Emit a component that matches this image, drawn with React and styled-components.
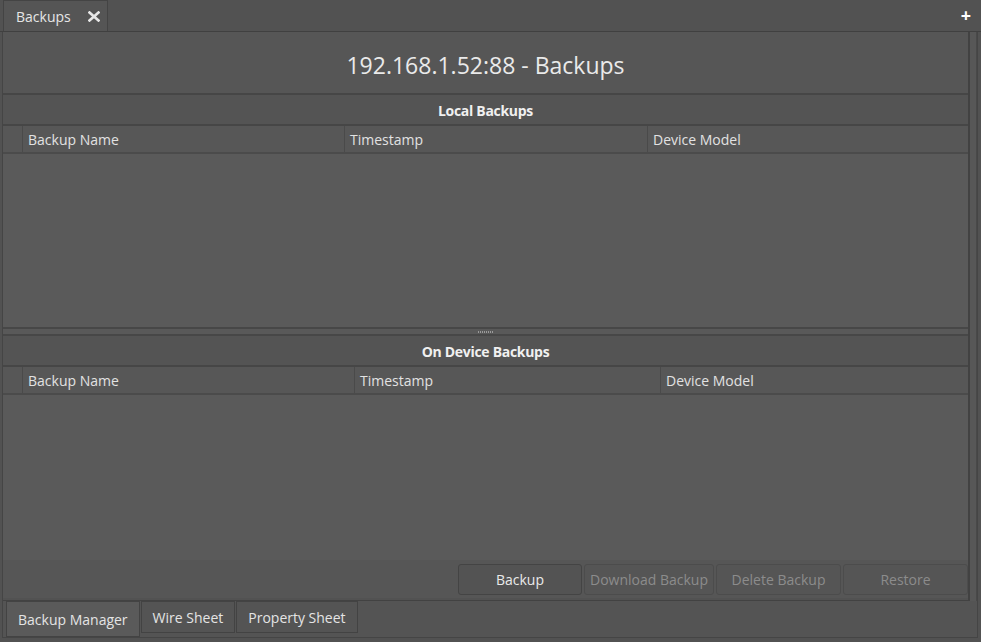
import React from "react";
import styled, { createGlobalStyle } from "styled-components";

const Global = createGlobalStyle`
  html, body { margin: 0; padding: 0; background: #525252; }
  body { font-family: "Open Sans", "Noto Sans", sans-serif; color: #e4e4e4; }
  * { box-sizing: border-box; }
`;

const Root = styled.div`
  width: 981px;
  height: 642px;
  display: flex;
  flex-direction: column;
  background: #525252;
  overflow: hidden;
`;

const TopBar = styled.div`
  height: 32px;
  display: flex;
  align-items: flex-end;
  padding-left: 3px;
  padding-right: 10px;
  border-bottom: 1px solid #404040;
`;

const DocTab = styled.div`
  width: 105px;
  height: 31px;
  display: flex;
  align-items: center;
  gap: 17px;
  padding-left: 12px;
  background: #555555;
  border: 1px solid #444;
  border-bottom: none;
  font-size: 14px;
  color: #e6e6e6;
`;

const CloseIcon = styled.svg`
  width: 12px;
  height: 11px;
  margin-top: 1px;
`;

const Plus = styled.span`
  margin-left: auto;
  align-self: center;
  font-weight: 700;
  font-size: 18px;
  color: #ffffff;
  line-height: 1;
  margin-bottom: 2px;
`;

const Frame = styled.div`
  flex: 1;
  margin: 0 3px 4px 2px;
  display: flex;
  flex-direction: column;
  border: 1px solid #454545;
  border-top: none;
`;

const Upper = styled.div`
  display: flex;
  flex: 1;
`;

const Content = styled.div`
  flex: 1;
  display: flex;
  flex-direction: column;
  border-right: 2px solid #424242;
  border-bottom: 1px solid #424242;
`;

const Strip = styled.div`
  width: 7px;
  background: #575757;
  border-right: 1px solid #494949;
`;

const TitleArea = styled.div`
  height: 63px;
  padding-top: 5px;
  display: flex;
  align-items: center;
  justify-content: center;
  font-size: 23px;
  color: #eaeaea;
  background: #565656;
  border-bottom: 2px solid #464646;
`;

const SectionBar = styled.div`
  height: 31px;
  padding-top: 1px;
  display: flex;
  align-items: center;
  justify-content: center;
  font-size: 14px;
  font-weight: 700;
  letter-spacing: -0.3px;
  color: #f0f0f0;
  background: #545454;
  border-bottom: 2px solid #464646;
`;

const HeaderRow = styled.div`
  height: 28px;
  display: grid;
  grid-template-columns: ${(p) => p.$cols};
  background: #575757;
  border-bottom: 2px solid #4b4b4b;
`;

const HeaderCell = styled.div`
  display: flex;
  align-items: center;
  padding-left: 5px;
  padding-top: 1px;
  font-size: 14px;
  color: #e2e2e2;
  border-left: ${(p) => (p.$first ? "none" : "1px solid #4a4a4a")};
`;

const Body = styled.div`
  height: ${(p) => p.$h}px;
  background: #5a5a5a;
`;

const Splitter = styled.div`
  height: 9px;
  display: flex;
  align-items: center;
  justify-content: center;
  background: #595959;
  border-top: 2px solid #474747;
  border-bottom: 2px solid #474747;
`;

const Grip = styled.div`
  width: 16px;
  height: 2px;
  background-image: repeating-linear-gradient(90deg, #9a9a9a 0 1px, transparent 1px 2px);
`;

const ButtonBar = styled.div`
  height: 38px;
  display: flex;
  align-items: center;
  justify-content: flex-end;
  gap: 2px;
  background: #565656;
`;

const Button = styled.div`
  width: ${(p) => p.$w}px;
  height: 31px;
  display: flex;
  align-items: center;
  justify-content: center;
  font-size: 14px;
  border-radius: 3px;
  color: ${(p) => (p.$disabled ? "#8c8c8c" : "#eaeaea")};
  background: ${(p) => (p.$disabled ? "#555555" : "#535353")};
  border: 1px solid ${(p) => (p.$disabled ? "#4c4c4c" : "#444444")};
`;

const BottomTabs = styled.div`
  height: 36px;
  display: flex;
  align-items: flex-start;
  padding-left: 3px;
  background: #545454;
`;

const BottomTab = styled.div`
  height: ${(p) => (p.$active ? 36 : 32)}px;
  padding: 0 11px;
  display: flex;
  align-items: center;
  font-size: 14px;
  color: #e4e4e4;
  background: ${(p) => (p.$active ? "#5a5a5a" : "#545454")};
  border: 1px solid #434343;
  margin-right: 1px;
`;

function Table({ cols, body }) {
  return (
    <>
      <HeaderRow $cols={cols}>
        <HeaderCell $first />
        <HeaderCell>Backup Name</HeaderCell>
        <HeaderCell>Timestamp</HeaderCell>
        <HeaderCell>Device Model</HeaderCell>
      </HeaderRow>
      <Body $h={body} />
    </>
  );
}

export default function App() {
  return (
    <Root>
      <Global />
      <TopBar>
        <DocTab>
          Backups
          <CloseIcon viewBox="0 0 12 11">
            <path d="M1.5 1.5 L10.5 9.5 M10.5 1.5 L1.5 9.5" stroke="#e8e8e8" strokeWidth="2.6" strokeLinecap="square" />
          </CloseIcon>
        </DocTab>
        <Plus>+</Plus>
      </TopBar>
      <Frame>
        <Upper>
          <Content>
            <TitleArea>192.168.1.52:88 - Backups</TitleArea>
            <SectionBar>Local Backups</SectionBar>
            <Table cols="19px 322px 303px 1fr" body={173} />
            <Splitter>
              <Grip />
            </Splitter>
            <SectionBar>On Device Backups</SectionBar>
            <Table cols="19px 332px 306px 1fr" body={165} />
            <ButtonBar>
              <Button $w={124}>Backup</Button>
              <Button $w={130} $disabled>Download Backup</Button>
              <Button $w={125} $disabled>Delete Backup</Button>
              <Button $w={125} $disabled>Restore</Button>
            </ButtonBar>
          </Content>
          <Strip />
        </Upper>
        <BottomTabs>
          <BottomTab $active>Backup Manager</BottomTab>
          <BottomTab>Wire Sheet</BottomTab>
          <BottomTab>Property Sheet</BottomTab>
        </BottomTabs>
      </Frame>
    </Root>
  );
}
